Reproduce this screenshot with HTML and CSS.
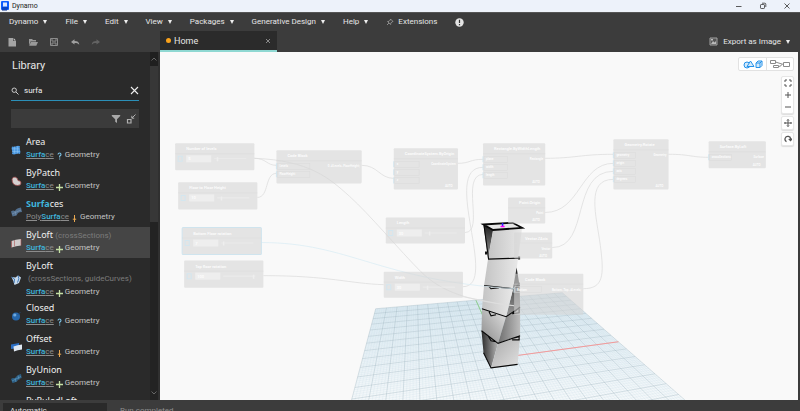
FILE: index.html
```html
<!DOCTYPE html>
<html lang="en">
<head>
<meta charset="utf-8">
<title>Dynamo</title>
<link rel="stylesheet" href="styles.css">
</head>
<body>
<div class="app">
  <header class="titlebar">
    <svg class="logo" viewBox="0 0 8 10"><rect width="8" height="9" rx="1" fill="#0b5cff"/><rect x="2" y="1.5" width="4" height="4" fill="#dbe8ff"/><path d="M1 7h6M1 9h5" stroke="#062a86" stroke-width="1"/></svg>
    <span>Dynamo</span>
    <div class="window-buttons">
      <button aria-label="Minimize"><svg viewBox="0 0 8 8"><path d="M1 4.5h5.500"/></svg></button>
      <button aria-label="Restore"><svg viewBox="0 0 8 8"><rect x="1.500" y="2.500" width="4" height="4" rx=".7"/><path d="M3 1.200h2.800q1 0 1 1V5"/></svg></button>
      <button aria-label="Close"><svg viewBox="0 0 8 8"><path d="M1.500 1.500l5 5M6.500 1.500l-5 5"/></svg></button>
    </div>
  </header>

  <nav class="menubar">
    <button class="menu">Dynamo<i class="caret"></i></button>
    <button class="menu">File<i class="caret"></i></button>
    <button class="menu">Edit<i class="caret"></i></button>
    <button class="menu">View<i class="caret"></i></button>
    <button class="menu">Packages<i class="caret"></i></button>
    <button class="menu">Generative Design<i class="caret"></i></button>
    <button class="menu">Help<i class="caret"></i></button>
    <button class="menu ext"><svg class="pin" viewBox="0 0 8 8"><path d="M4.500 1l2.500 2.500-1 .3-1.200 1.400-.2 1.300L1.600 3.500l1.400-.2L4.300 2zM3 5L1 7" fill="none" stroke="#a2a2a2" stroke-width=".8"/></svg>Extensions</button>
    <button class="menu" aria-label="Notifications"><svg class="alert" viewBox="0 0 9 9"><circle cx="4.500" cy="4.500" r="4.200" fill="#e4e4e4"/><path d="M4.500 1.800v3.300M4.500 6v1.200" stroke="#333" stroke-width="1.200"/></svg></button>
  </nav>

  <div class="toolbar">
    <div class="tools">
      <button aria-label="New"><svg viewBox="0 0 10 10"><path d="M1.500 1h4.500v3h3v5.500H1.500z" fill="#a4a4a4"/><path d="M6.600 1L9 3.400H6.600z" fill="#c8c8c8"/></svg></button>
      <button aria-label="Open"><svg viewBox="0 0 10 10"><path d="M1 8.500V2h3l1 1h3v1.500H2.600z" fill="#999"/><path d="M2.800 5.100H10L8.300 8.700H1.200z" fill="#999"/></svg></button>
      <button aria-label="Save"><svg viewBox="0 0 10 10"><path d="M1.500 1.500h7v7h-7zM3 1.500v2.600h4V1.500M3 8.500V6h4v2.500" fill="none" stroke="#8c8c8c"/></svg></button>
      <button aria-label="Undo"><svg viewBox="0 0 10 10"><path d="M1 5l3.500-2.700v1.700C7.500 4 9 5 9.300 7.800 8 6.300 6.800 6 4.500 6v1.600z" fill="#a0a0a0"/></svg></button>
      <button aria-label="Redo"><svg viewBox="0 0 10 10"><path d="M9 5L5.500 2.300v1.700C2.500 4 1 5 .7 7.800 2 6.300 3.200 6 5.500 6v1.600z" fill="#636363"/></svg></button>
    </div>
    <div class="tab"><i class="dot"></i><span>Home</span><button aria-label="Close tab"><svg viewBox="0 0 8 8"><path d="M2 2l4 4M6 2l-4 4" stroke="#8a8a8a"/></svg></button></div>
    <button class="export"><svg viewBox="0 0 9 9"><path d="M1 1h7v7H1z" fill="#555" stroke="#a0a0a0"/><path d="M2 7l2-3 1.500 1.500L7 4v3zM2 2h2v1.500H2z" fill="#bbb"/></svg>Export as Image<i class="caret"></i></button>
  </div>

  <div class="body">
    <aside class="library">
      <div class="library-main">
        <h1>Library</h1>
        <div class="search">
          <svg class="lens" viewBox="0 0 8 8"><circle cx="3.200" cy="3.200" r="2.200" fill="none" stroke="#ccc"/><path d="M5 5l2.500 2.500" stroke="#ccc"/></svg>
          <input type="text" value="surfa" aria-label="Search library">
          <button aria-label="Clear"><svg viewBox="0 0 9 9"><path d="M1 1l7 7M8 1L1 8" stroke="#eee" stroke-width="1.100"/></svg></button>
        </div>
        <div class="filters">
          <button aria-label="Filter"><svg viewBox="0 0 10 10"><path d="M.8 1h8.400v1L6 5.300V9L4.200 7.800V5.300L.8 2z" fill="#a9a9a9"/></svg></button>
          <button aria-label="Collapse view"><svg viewBox="0 0 10 10"><path d="M1.500 5.500H5V9H1.500z" fill="none" stroke="#b0b0b0" stroke-width="1.200"/><path d="M9.500.5L6 4M5.800 1.800V4.200h2.400" fill="none" stroke="#b0b0b0"/></svg></button>
        </div>
        <ul class="results">
          <li><svg class="ic" viewBox="0 0 12 12"><path d="M2 2.500q2 .8 4-.2t4 0q-.8 2 0 3.700t0 4q-2-.8-4 0t-4 0q.8-2 0-3.700t0-3.800z" fill="#4f9be2"/><path d="M4.500 2.500v7M7.500 2.500v7M2 4.800h8M2 7.500h8" stroke="#8fc4f5" stroke-width=".5"/></svg>
            <div><b>Area</b><p><a href="#"><em>Surfa</em>ce</a><svg class="k" viewBox="0 0 7 8"><path d="M2 2.500q.1-1.500 1.500-1.500T5 2.500Q5 3.500 3.700 4v1.500M3.700 6.500v1" fill="none" stroke="#7cc3e6" stroke-width="1.100"/></svg>Geometry</p></div></li>
          <li><svg class="ic" viewBox="0 0 12 12"><path d="M2 4Q3 1.500 5.500 2.200T8 5.500q3 0 3 2.500T7.500 10.500Q2 10.500 2 4z" fill="#d4d0d0" stroke="#a04a4a" stroke-width=".8"/></svg>
            <div><b>ByPatch</b><p><a href="#"><em>Surfa</em>ce</a><svg class="k" viewBox="0 0 7 8"><path d="M3.500 1v7M0 4.500h7" stroke="#c5e0a5" stroke-width="1.300"/></svg>Geometry</p></div></li>
          <li><svg class="ic" viewBox="0 0 12 12"><path d="M1 5.500q2-1.500 4-.5 1-3 6-3.500l1 4.500q-2.500 0-4 1-1 3-5.500 3.500z" fill="#526f8e"/><path d="M5 5l1 4.500M2 8l9-4" stroke="#7d9ab8" stroke-width=".6"/></svg>
            <div><b><em>Surfa</em>ces</b><p><a href="#">Poly<em>Surfa</em>ce</a><svg class="k" viewBox="0 0 7 8"><path d="M3.500 1v7M1.800 5.200h3.400" stroke="#e9a850" stroke-width="1"/></svg>Geometry</p></div></li>
          <li class="selected"><svg class="ic" viewBox="0 0 12 12"><path d="M1.500 4q4-1.500 9.500-2v6.500q-5 .5-9.500 2z" fill="#cfcaca"/><path d="M1.500 4v6.500M11 2v6.500M4.500 3.200v6.200" stroke="#a95252" stroke-width=".6"/></svg>
            <div><b>ByLoft</b> <small>(crossSections)</small><p><a href="#"><em>Surfa</em>ce</a><svg class="k" viewBox="0 0 7 8"><path d="M3.500 1v7M0 4.500h7" stroke="#c5e0a5" stroke-width="1.300"/></svg>Geometry</p></div></li>
          <li class="tall"><svg class="ic" viewBox="0 0 12 12"><path d="M1.500 3l4 .5L8 1.500l3 2-2 5.500-4.500 2-1-3.500z" fill="#c7d9ea"/><path d="M1.500 3l3 2-.5 4M8 1.500q2 3-.5 7" fill="none" stroke="#2f6bb0" stroke-width=".9"/></svg>
            <div><b>ByLoft</b><small class="args">(crossSections, guideCurves)</small><p><a href="#"><em>Surfa</em>ce</a><svg class="k" viewBox="0 0 7 8"><path d="M3.500 1v7M0 4.500h7" stroke="#c5e0a5" stroke-width="1.300"/></svg>Geometry</p></div></li>
          <li><svg class="ic" viewBox="0 0 12 12"><circle cx="6" cy="6.500" r="4" fill="#2667ac"/><circle cx="4.800" cy="5" r="1.600" fill="#6fa8dc"/><path d="M8 4.500l2.500-2.500" stroke="#23456b"/></svg>
            <div><b>Closed</b><p><a href="#"><em>Surfa</em>ce</a><svg class="k" viewBox="0 0 7 8"><path d="M2 2.500q.1-1.500 1.500-1.500T5 2.500Q5 3.500 3.700 4v1.500M3.700 6.500v1" fill="none" stroke="#7cc3e6" stroke-width="1.100"/></svg>Geometry</p></div></li>
          <li><svg class="ic" viewBox="0 0 12 12"><path d="M1 3.500l8-1.500v5l-8 1z" fill="#2c6fc4"/><path d="M3.500 5.500q4-1.500 8.500-2v5q-4.500.5-8 2z" fill="#dfe8f2"/></svg>
            <div><b>Offset</b><p><a href="#"><em>Surfa</em>ce</a><svg class="k" viewBox="0 0 7 8"><path d="M3.500 1v7M1.800 5.200h3.400" stroke="#e9a850" stroke-width="1"/></svg>Geometry</p></div></li>
          <li><svg class="ic" viewBox="0 0 12 12"><path d="M1 7q2-1.500 4-.5 1-3 6-4.500l.7 4Q9 6.500 8 8q-1 2-5.500 3z" fill="#2d5f85"/><path d="M2 9l9-4.500M5 6l1 4M8 3.500l1 4" stroke="#5c96bd" stroke-width=".7"/></svg>
            <div><b>ByUnion</b><p><a href="#"><em>Surfa</em>ce</a><svg class="k" viewBox="0 0 7 8"><path d="M3.500 1v7M0 4.500h7" stroke="#c5e0a5" stroke-width="1.300"/></svg>Geometry</p></div></li>
          <li><span class="ic"></span><div><b>ByRuledLoft</b></div></li>
        </ul>
      </div>
      <div class="scroll"><button aria-label="Scroll up"><svg viewBox="0 0 8 6"><path d="M1.500 4.500L4 2l2.500 2.500"/></svg></button><i class="thumb"></i><button class="down" aria-label="Scroll down"><svg viewBox="0 0 8 6"><path d="M1.500 1.500L4 4l2.500-2.500"/></svg></button></div>
    </aside>

    <main class="canvas">
      <svg class="scene" id="scene" viewBox="160 52 638 347" preserveAspectRatio="xMidYMid slice">
        <defs>
          <linearGradient id="shade-left" x1="0" x2="1"><stop offset="0" stop-color="#2c2c2c"/><stop offset="1" stop-color="#b5b5b5"/></linearGradient>
          <linearGradient id="lit" x1="0" x2="1"><stop offset="0" stop-color="#c4c4c4"/><stop offset="1" stop-color="#e8e8e8"/></linearGradient>
          <linearGradient id="mid" x1="0" x2="1" y1="1" y2="0"><stop offset="0" stop-color="#8a8a8a"/><stop offset="1" stop-color="#e2e2e2"/></linearGradient>
          <linearGradient id="dim" x1="0" x2="1"><stop offset="0" stop-color="#6e6e6e"/><stop offset="1" stop-color="#bdbdbd"/></linearGradient>
          <linearGradient id="dark" x1="0" x2="0" y1="0" y2="1"><stop offset="0" stop-color="#1c1c1c"/><stop offset="1" stop-color="#9c9c9c"/></linearGradient>
          <linearGradient id="base" x1="0" x2="1" y1="0" y2="1"><stop offset="0" stop-color="#a7a7a7"/><stop offset="1" stop-color="#e2e2e2"/></linearGradient>
        </defs>
        <g id="grid"></g>
        <g class="tower">
          <path d="M483.500 224l29-1.700 9.500 5-29 2.700z" fill="#e6e6e6"/>
          <path d="M483.500 224l9.500 6-5 28.500z" fill="url(#dark)"/>
          <path d="M493 230l29-2.700-4 30-30 1z" fill="url(#lit)"/>
          <path d="M488 258.500l30-1-1.500 11-3.500 19.500-29-3z" fill="url(#lit)"/>
          <path d="M516.500 267l3 18 .5 21.500-14 9.500 7-28z" fill="url(#dark)"/>
          <path d="M484 285l29 3-7 28-24-8z" fill="url(#lit)"/>
          <path d="M482 308l24 8-8 26.500-16.500-12.500z" fill="url(#mid)"/>
          <path d="M506 316l14-9.500V335l-22 7.500z" fill="url(#dim)"/>
          <path d="M481.500 330l16.500 12.500-7 24.500-7.500-15z" fill="url(#shade-left)"/>
          <path d="M498 342.500l22-7.500-2.500 28.500-26.500 3.500z" fill="url(#base)"/>
          <g fill="none" stroke="#080808" stroke-width="1.100">
            <path d="M483.500 224l29-1.700 9.500 5-29 2.200z" stroke-width="1.800"/>
            <path d="M484 225l4.500 33M488 258.500l31-1M484 285l29 3 6.500-3M489 286l2 2 8-1M515 287l4-4v2M482 308l24 8 14-9.500M489 311l2 4 5-1M513 312l6-5v5l-7 1M481.500 330l16.500 12.500 22-7.500M488 335l3 5 5 1M511 338l8-2v3l-7 0M483.500 352l7.500 15 26.500-3.500" />
          </g>
          <path d="M486 251v3M519 256v3" stroke="#111" stroke-width="2"/>
          <path d="M502.500 222.500v3" stroke="#22f" stroke-width="1.500"/><path d="M500.500 226h4" stroke="#f0f" stroke-width="1.500"/>
        </g>
        <g id="graph"></g>
      </svg>
      <div class="modes">
        <button aria-label="3D preview"><svg viewBox="0 0 20 10"><g fill="#d4eafb" stroke="#2492ea"><circle cx="4" cy="6" r="3"/><path d="M4 7.500L7.500 2 11 7.500zM13 4h4v4.500h-4zM13 4l2-2h4L17 4M19 2v4.500l-2 2"/></g></svg></button>
        <button aria-label="Graph view"><svg viewBox="0 0 20 10"><g fill="none" stroke="#8a8a8a"><path d="M.5 1.500h5v3h-5zM13.500 3.500h6v4h-6zM3.500 6.500h5v2h-5zM5.500 3l8 2.500M8.500 7.500q3 0 3-2"/></g></svg></button>
      </div>
      <div class="nav">
        <div class="group">
          <button aria-label="Fit"><svg viewBox="0 0 8 8"><path d="M1 3V1h2M5 1h2v2M7 5v2H5M3 7H1V5"/></svg></button>
          <button aria-label="Zoom in"><svg viewBox="0 0 8 8"><path d="M4 1v6M1 4h6"/></svg></button>
          <button aria-label="Zoom out"><svg viewBox="0 0 8 8"><path d="M1 4h6"/></svg></button>
        </div>
        <div class="group"><button aria-label="Pan"><svg viewBox="0 0 8 8"><path d="M4 .5v7M.5 4h7M3 1.500l1-1 1 1M3 6.500l1 1 1-1M1.500 3l-1 1 1 1M6.500 3l1 1-1 1"/></svg></button></div>
        <div class="group"><button aria-label="Orbit"><svg viewBox="0 0 8 8"><path d="M2.500 6.600A2.800 2.800 0 1 1 6.600 4.500M4.800 4l1.800 1.500L8 3.500" stroke-width="1.300"/></svg></button></div>
      </div>
    </main>
  </div>

  <footer class="status">
    <select aria-label="Run mode"><option>Automatic</option></select>
    <span>Run completed.</span>
  </footer>
</div>
<script src="scene.js"></script>
</body>
</html>
```
FILE: styles.css
```css
* { box-sizing: border-box; }
body { margin: 0; background: #3c3c3c; color: #e6e6e6; font: 8px/10px Roboto, "Noto Sans", sans-serif; }
button { margin: 0; padding: 0; border: 0; background: none; color: inherit; font: inherit; display: flex; align-items: center; justify-content: center; }
svg { display: block; }
.app { height: 100vh; display: flex; flex-direction: column; overflow: hidden; }

.titlebar { flex: none; height: 12px; display: flex; align-items: center; gap: 3px; padding: 0 9px 0 1px; background: #edf2fa; color: #222; font-size: 7px; }
.logo { width: 8px; height: 10px; }
.window-buttons { margin-left: auto; display: flex; gap: 16px; }
.window-buttons svg { width: 8px; height: 8px; fill: none; stroke: #333; stroke-width: .8; }

.menubar { flex: none; height: 19px; display: flex; align-items: center; gap: 18px; padding: 0 9px; border-top: 1px solid #555; }
.menu { gap: 5px; }
.caret { border: 2px solid transparent; border-top: 4px solid #eee; border-bottom: 0; }
.pin { width: 8px; height: 8px; }
.ext { gap: 4px; }
.alert { width: 9px; height: 9px; }

.toolbar { flex: none; height: 21px; display: flex; align-items: stretch; }
.tools { width: 160px; display: flex; align-items: center; gap: 11px; padding-left: 7px; }
.tools svg { width: 10px; height: 10px; }
.tab { width: 117px; display: flex; align-items: center; gap: 3px; padding: 0 5px 0 6px; background: #2b2b2b; border-bottom: 2px solid #8fd8d2; font-size: 9px; line-height: 12px; }
.tab button { margin-left: auto; }
.tab svg { width: 8px; height: 8px; }
.dot { width: 5px; height: 5px; border-radius: 50%; background: #faa21b; }
.export { margin-left: auto; padding-right: 10px; gap: 5px; }
.export svg { width: 9px; height: 9px; }

.body { flex: 1; min-height: 0; display: flex; }
.library { flex: none; width: 160px; display: flex; background: #2a2a2a; border-right: 2px solid #303030; overflow: hidden; }
.library-main { flex: 1; min-width: 0; }
h1 { margin: 7px 0 0 12px; font-size: 11px; line-height: 14px; font-weight: 400; }
.search { height: 20px; margin: 8px 11px 0; display: flex; align-items: center; gap: 5px; border-bottom: 1px solid #2b8fb8; }
.search svg { width: 8px; height: 8px; }
.search button svg { width: 9px; height: 9px; }
.search input { flex: 1; min-width: 0; padding: 0; border: 0; outline: 0; background: none; color: #eee; font: inherit; }
.filters { height: 19px; margin: 8px 11px 0; padding: 0 3px; display: flex; align-items: center; justify-content: flex-end; gap: 5px; background: #3b3b3b; }
.filters svg { width: 10px; height: 10px; }
.results { margin: 6px 0 0; padding: 0; list-style: none; }
.results li { height: 31px; display: flex; align-items: flex-start; gap: 4px; padding: 1px 0 0 10px; }
.results .tall { height: 42px; }
.results .selected { background: #454545; }
.results div { font: 9px/13px "Noto Sans", sans-serif; }
.ic { flex: none; align-self: center; width: 12px; height: 12px; }
.results b { display: inline-block; font-weight: 400; color: #f0f0f0; }
.results em { font-style: normal; font-weight: 700; color: #3fb5dd; }
.results small { font: 8px/1px Roboto, sans-serif; color: #7c7c7c; }
.results .args { display: block; padding-left: 2px; line-height: 13px; white-space: nowrap; }
.results p { margin: 0; display: flex; align-items: center; font: 8px/13px Roboto, sans-serif; color: #c4c4c4; }
.results a { color: #8c8c8c; text-decoration: underline; }
.results p em { font-weight: 500; }
.k { width: 7px; height: 8px; margin: 2px 2px 0; }
.scroll { flex: none; width: 8px; display: flex; flex-direction: column; background: #232323; }
.scroll button { height: 14px; background: #1f1f1f; }
.scroll svg { width: 8px; height: 6px; fill: none; stroke: #666; }
.scroll .thumb { height: 156px; background: #373737; }
.scroll .down { margin-top: auto; background: none; }

.canvas { flex: 1; min-width: 0; position: relative; margin-right: 2px; background: #f9f9f9; }
.scene { width: 100%; height: 100%; }
.modes { position: absolute; top: 5px; right: 4px; display: flex; background: #fff; border: 1px solid #e2e2e2; border-radius: 2px; }
.modes button { width: 27px; height: 12px; }
.modes button + button { border-left: 1px solid #e2e2e2; }
.modes svg { width: 20px; height: 10px; }
.nav { position: absolute; top: 24px; right: 4px; display: flex; flex-direction: column; gap: 2px; }
.group { background: #fff; border: 1px solid #e6e6e6; border-radius: 2px; box-shadow: 0 1px 1px #ddd; }
.group button { width: 11px; height: 12px; }
.group svg { width: 8px; height: 8px; fill: none; stroke: #555; }

.status { flex: none; height: 11px; display: flex; gap: 13px; padding: 3px 3px 0; overflow: hidden; color: #8c8c8c; }
.status select { width: 104px; height: 16px; padding: 0 7px; border: 0; background: #2a2a2a; color: #ddd; font: inherit; appearance: none; }
.status span { padding-top: 3px; }

#graph .wire { fill: none; stroke: #dfdfdf; stroke-width: .8; }
#graph .wire.hot { stroke: #dcedf5; }
#graph .node { fill: #d6d6d6; fill-opacity: .6; }
#graph .node.hot { stroke: #cfe4ee; }
#graph .bar { fill: none; stroke: #dadada; stroke-width: .5; }
#graph .field { fill: #eeeeee; }
#graph .port { stroke: #d3e6ef; }
#graph text { fill: #fff; font-size: 4px; font-weight: 500; }
#graph .small { font-size: 3px; }
.fine { fill: none; stroke: #bfd8e4; stroke-width: .4; stroke-opacity: .45; }
.major { fill: none; stroke: #93adb9; stroke-width: .5; stroke-opacity: .65; }
```
FILE: scene.js
```js
// Projective map from ground-plane coordinates to the view.
function solve(m) {
  const n = m.length;
  for (let i = 0; i < n; i++) {
    let p = i;
    for (let r = i; r < n; r++) if (Math.abs(m[r][i]) > Math.abs(m[p][i])) p = r;
    [m[i], m[p]] = [m[p], m[i]];
    for (let r = 0; r < n; r++) {
      if (r === i) continue;
      const f = m[r][i] / m[i][i];
      for (let c = i; c <= n; c++) m[r][c] -= f * m[i][c];
    }
  }
  return m.map((row, i) => row[n] / row[i]);
}
const anchors = [[-10, 10, 376, 308], [10, 10, 562, 292], [10, 0, 618, 341], [-10, 0, 358, 376]];
const rows = [];
for (const [x, y, u, v] of anchors) {
  rows.push([x, y, 1, 0, 0, 0, -u * x, -u * y, u]);
  rows.push([0, 0, 0, x, y, 1, -v * x, -v * y, v]);
}
const h = solve(rows);
const at = (x, y) => {
  const w = h[6] * x + h[7] * y + 1;
  return ((h[0] * x + h[1] * y + h[2]) / w).toFixed(2) + ' ' + ((h[3] * x + h[4] * y + h[5]) / w).toFixed(2);
};
const near = -8;
let fine = '', major = '';
for (let i = -50; i <= 50; i++) {
  const d = `M${at(i / 5, near)}L${at(i / 5, 10)}`;
  if (i % 5) fine += d; else major += d;
}
for (let i = near * 5; i <= 50; i++) {
  const d = `M${at(-10, i / 5)}L${at(10, i / 5)}`;
  if (i % 5) fine += d; else major += d;
}
document.getElementById('grid').innerHTML =
  '<linearGradient id="floor" gradientUnits="userSpaceOnUse" x1="0" x2="0" y1="292" y2="399"><stop offset="0" stop-color="#dcebf3"/><stop offset="1" stop-color="#f4f8fa"/></linearGradient>' +
  `<path fill="url(#floor)" d="M${at(-10, near)}L${at(-10, 10)}L${at(10, 10)}L${at(10, near)}z"/>` +
  `<path class="fine" d="${fine}"/><path class="major" d="${major}"/>` +
  `<path d="M${at(0, 0)}L${at(10, 0)}" stroke="#f49a9a"/><path d="M${at(0, 0)}L${at(0, 10)}" stroke="#8fd08f"/>`;

// x, y, width, height, title, kind, value or ports
const nodes = [
  [176, 143, 79, 27, 'Number of levels', 'slider', '5', 0.05],
  [179, 182, 79, 27, 'Floor to Floor Height', 'slider', '10', 0.08],
  [183, 227, 79, 27, 'Bottom Floor rotation', 'slider', '7', 0.02],
  [185, 260, 79, 27, 'Top floor rotation', 'slider', '100', 0.95],
  [386, 217, 79, 26, 'Length', 'slider', '30', 0.1],
  [384, 271, 79, 26, 'Width', 'slider', '30', 0.1],
  [277, 150, 85, 33, 'Code Block', 'code', ['Levels', 'FloorHeight'], '0..#Levels..FloorHeight;'],
  [394, 148, 64, 41, 'CoordinateSystem.ByOrigin', 'fn', ['x', 'y', 'z'], 'CoordinateSystem'],
  [483, 143, 62, 42, 'Rectangle.ByWidthLength', 'fn', ['plane', 'width', 'length'], 'Rectangle'],
  [508, 197, 37, 26, 'Point.Origin', 'fn', [], 'Point'],
  [514, 232, 38, 26, 'Vector.ZAxis', 'fn', [], 'Vector'],
  [514, 273, 69, 41, 'Code Block', 'code', ['Bottom'], 'Bottom..Top..#Levels;'],
  [613, 139, 55, 50, 'Geometry.Rotate', 'fn', ['geometry', 'origin', 'axis', 'degrees'], 'Geometry'],
  [708, 141, 57, 27, 'Surface.ByLoft', 'fn', ['crossSections'], 'Surface']
];
const wires = [
  'M255 158C267 158 267 165 277 165', 'M255 158C310 160 330 178 350 196S400 250 421 271S470 300 514 305',
  'M258 197C270 197 265 173 277 173', 'M362 165C378 165 380 178 394 178',
  'M264 275C330 275 350 283 384 284', 'M458 163C470 163 470 159 483 159',
  'M545 158C575 158 580 154 613 154', 'M545 212C580 212 580 163 613 163',
  'M552 247C590 247 570 171 613 171', 'M583 288C603 288 604 275 600 245S585 179 613 179',
  'M668 154C690 154 690 157 708 157', 'M465 232C485 232 460 175 483 174',
  'M463 286C500 286 440 167 483 167', 'M463 296C485 300 495 303 514 305'
];
let out = wires.map(d => `<path class="wire" d="${d}"/>`).join('') +
  '<path class="wire hot" d="M262 242C350 242 380 280 514 288"/>';
for (const [x, y, w, ht, title, kind, a, b] of nodes) {
  const hot = title.startsWith('Bottom') ? ' hot' : '';
  out += `<rect class="node${hot}" x="${x}" y="${y}" width="${w}" height="${ht}" rx="1"/>`;
  out += `<path class="bar" d="M${x} ${y + 10.5}h${w}"/><text x="${x + 11}" y="${y + 7}">${title}</text>`;
  if (kind === 'slider') {
    out += `<path class="port" fill="none" d="M${x + 3} ${y + 13}h4v5h-4z"/>` +
      `<rect class="field" x="${x + 11}" y="${y + 12}" width="25" height="7"/><text x="${x + 13}" y="${y + 17}">${a}</text>` +
      `<path class="field" d="M${x + 39} ${y + 15.200}h32v.6h-32zM${x + 40 + 30 * b} ${y + 14}h1.500v4h-1.500z"/>`;
  } else {
    a.forEach((p, i) => {
      const py = y + 16 + i * 8;
      out += `<path class="port" d="M${x} ${py - 3}v6"/><rect class="bar" x="${x + 1}" y="${py - 3}" width="${w * .38}" height="6"/>` +
        `<text class="small" x="${x + 3}" y="${py + 1}">${p}</text>`;
    });
    out += `<text class="small" text-anchor="end" x="${x + w - 2}" y="${y + 17}">${b}</text>`;
    if (kind === 'fn') out += `<text class="small" x="${x + w - 13}" y="${y + ht - 2}">AUTO</text>`;
  }
}
document.getElementById('graph').innerHTML = out;
```
